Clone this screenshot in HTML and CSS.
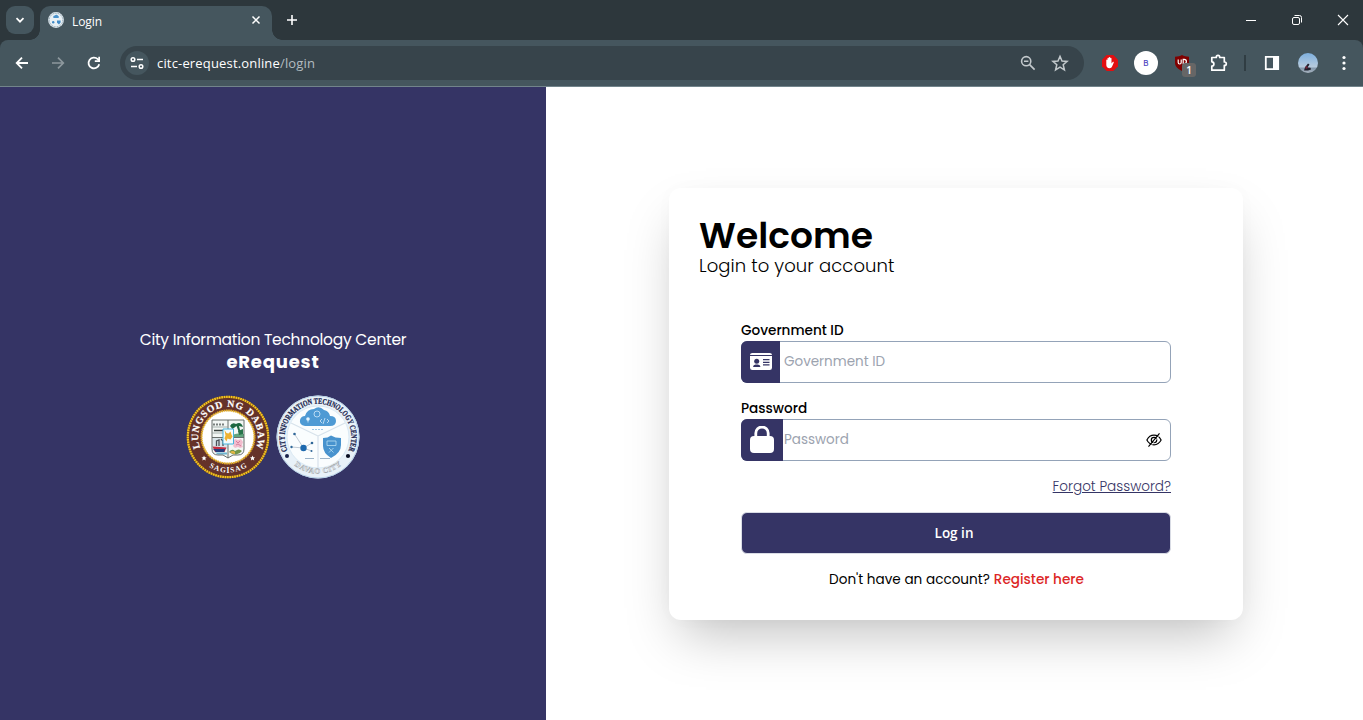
FILE: index.html
```html
<!DOCTYPE html>
<html lang="en">
<head>
<meta charset="utf-8">
<title>Login</title>
<link rel="stylesheet" href="styles.css">
</head>
<body>
<header class="browser">
  <div class="tabstrip">
    <div class="tab-search"><svg width="28" height="28" viewBox="0 0 28 28"><path d="M10.5 12.2l3.5 3.5 3.5-3.5" fill="none" stroke="#fff" stroke-width="1.7"/></svg></div>
    <div class="tab">
      <svg class="favicon" width="16" height="16" viewBox="0 0 16 16"><circle cx="8" cy="8" r="7.9" fill="#e9f1f5"/><circle cx="8" cy="8" r="6.8" fill="none" stroke="#8098a8" stroke-dasharray="1 .7"/><path d="M5.5 6a1.8 1.8 0 0 1 1.3-2.5 2 2 0 0 1 3.4.6A1.2 1.2 0 0 1 10.5 6z" fill="#4b93cb"/><path d="M9 8.5h3.6v2L11 12.5 9 10.8z" fill="#418bc7"/><circle cx="5.2" cy="10.2" r="1.2" fill="#418bc7"/></svg>
      <span class="tab-title">Login</span>
      <svg class="tab-close" width="16" height="16" viewBox="0 0 16 16"><path d="M4.5 4.5l7 7M11.5 4.5l-7 7" stroke="#fff" stroke-width="1.5"/></svg>
    </div>
    <svg class="new-tab" width="14" height="14" viewBox="0 0 14 14"><path d="M7 2v10M2 7h10" stroke="#fff" stroke-width="1.6"/></svg>
    <div class="window-buttons">
      <svg width="46" height="40" viewBox="0 0 46 40"><path d="M18 20.5h10" stroke="#fff"/></svg>
      <svg width="46" height="40" viewBox="0 0 46 40"><rect x="18.5" y="17.500" width="7" height="7" rx="1.5" fill="none" stroke="#fff"/><path d="M20.500 15.500h5a2 2 0 0 1 2 2v5" fill="none" stroke="#fff"/></svg>
      <svg width="46" height="40" viewBox="0 0 46 40"><path d="M18 15l10 10M28 15l-10 10" stroke="#fff" stroke-width="1.1"/></svg>
    </div>
  </div>
  <div class="toolbar">
    <div class="nav">
      <svg width="16" height="16" viewBox="0 0 16 16"><path d="M14 8H3M8 2.700L2.700 8 8 13.300" fill="none" stroke="#fff" stroke-width="1.8"/></svg>
      <svg width="16" height="16" viewBox="0 0 16 16"><path d="M2 8h11M8 2.700L13.300 8 8 13.300" fill="none" stroke="#8d989d" stroke-width="1.7"/></svg>
      <svg width="16" height="16" viewBox="0 0 16 16"><path d="M13.200 9.200A5.400 5.400 0 1 1 11.800 4.200L13 5.400" fill="none" stroke="#fff" stroke-width="1.8"/><path d="M14 1.800V7H8.800V5.300h3.500V1.800z" fill="#fff"/></svg>
    </div>
    <div class="omnibox">
      <div class="site-info"><svg width="24" height="24" viewBox="0 0 24 24"><g fill="none" stroke="#fff" stroke-width="1.500"><circle cx="8" cy="8.500" r="1.800"/><path d="M12 8.500h6M6 15.500h6"/><circle cx="16" cy="15.500" r="1.800"/></g></svg></div>
      <div class="url">citc-erequest.online<span class="path">/login</span></div>
      <svg class="zoom-icon" width="16" height="16" viewBox="0 0 16 16"><g fill="none" stroke="#c3c9cc" stroke-width="1.600"><circle cx="6.200" cy="6.200" r="4.600"/><path d="M9.600 9.600l5 5M4 6.200h4.400"/></g></svg>
      <svg width="18" height="18" viewBox="0 0 18 18"><path d="M9 2.300l2 4.700 5.100.4-3.900 3.400 1.200 5L9 13.100l-4.400 2.700 1.200-5L1.900 7.400 7 7z" fill="none" stroke="#c3c9cc" stroke-width="1.500"/></svg>
    </div>
    <div class="extensions">
      <svg width="16" height="16" viewBox="0 0 16 16"><path d="M4.700 0h6.600L16 4.700v6.600L11.300 16H4.700L0 11.300V4.700z" fill="#e20e10"/><path d="M4.300 8.500V5.200c0-.9 1.100-.9 1.200 0V3.400c0-.9 1.200-.9 1.300 0v-.8c0-.9 1.300-.9 1.400 0v.8c0-.8 1.300-.8 1.300.1v5l1-1.300c.6-.7 1.600-.3 1.200.5l-1.500 3.500c-.5 1.300-1.200 2-2.700 2-2 0-3.200-1.300-3.200-3.200z" fill="#fff"/></svg>
      <div class="ext-b">B</div>
      <div class="shield">
        <svg width="14" height="16" viewBox="0 0 14 16"><path d="M7 0c2 1.300 4 1.600 7 1.700v6c0 4.300-3.500 6.500-7 8.300C3.500 14.200 0 12 0 7.700v-6C3 1.600 5 1.300 7 0z" fill="#800000"/><path d="M3.200 4.500v3a1.500 1.500 0 0 0 3 0v-3M8.200 4.300v4.400h1a2.200 2.200 0 0 0 0-4.400z" fill="none" stroke="#fff" stroke-width="1.200"/></svg>
        <span class="badge">1</span>
      </div>
      <svg width="18" height="18" viewBox="0 0 18 18"><path d="M1.800 3.500H6.300V3a1.700 1.700 0 0 1 3.400 0v.5h4.600V8h.3a1.700 1.700 0 0 1 0 3.400h-.3v4.800H1.800v-4c2.800-.2 2.800-4.200 0-4.400z" fill="none" stroke="#fff" stroke-width="1.700" stroke-linejoin="round"/></svg>
      <div class="divider"></div>
      <svg class="side-panel" width="16" height="16" viewBox="0 0 16 16"><path d="M1.800 1.800h12.400v12.400H1.800z" fill="none" stroke="#fff" stroke-width="1.800"/><path d="M9 1h6v14H9z" fill="#fff"/></svg>
      <svg class="avatar" width="20" height="20" viewBox="0 0 20 20"><defs><linearGradient id="sky" x2="0" y2="1"><stop stop-color="#7eb0df"/><stop offset=".7" stop-color="#b7cbdd"/><stop offset=".75" stop-color="#8398ac"/><stop offset="1" stop-color="#a7b2be"/></linearGradient></defs><circle cx="10" cy="10" r="10" fill="url(#sky)"/><path d="M10 10.500l1.500 1-2 3 3 .2.500 1.800-3 1H6l1-3.200z" fill="#20202c"/><path d="M8 13l2 1-1 2-2-1z" fill="#702538"/></svg>
      <svg class="menu-dots" width="4" height="16" viewBox="0 0 4 16"><g fill="#fff"><circle cx="2" cy="2.500" r="1.600"/><circle cx="2" cy="8" r="1.600"/><circle cx="2" cy="13.500" r="1.600"/></g></svg>
    </div>
  </div>
</header>

<main class="page">
  <section class="brand">
    <p class="brand-org">City Information Technology Center</p>
    <p class="brand-app">eRequest</p>
    <div class="seals">
      <svg width="84" height="84" viewBox="0 0 84 84">
        <defs><path id="cityTop" d="M15.600 56A29.900 29.900 0 1 1 68.400 56"/><path id="cityBottom" d="M13 62.500A35.500 35.500 0 0 0 71 62.500"/></defs>
        <circle cx="42" cy="42" r="41" fill="#653229"/>
        <circle cx="42" cy="42" r="40.200" fill="none" stroke="#8d5d16" stroke-width="2.200"/>
        <circle cx="42" cy="42" r="40.200" fill="none" stroke="#f5c722" stroke-width="2.200" stroke-dasharray="1.600 .8"/>
        <circle cx="42" cy="42" r="26.500" fill="#fff" stroke="#e1ac28" stroke-width="2" stroke-dasharray="1.800 .5"/>
        <text class="seal-city"><textPath href="#cityTop" startOffset="50%" text-anchor="middle" textLength="116">LUNGSOD NG DABAW</textPath></text>
        <text class="seal-motto"><textPath href="#cityBottom" startOffset="50%" text-anchor="middle" textLength="40">SAGISAG</textPath></text>
        <path id="star" d="M18 60.500l.8 1.700 1.900.2-1.400 1.200.4 1.900-1.700-1-1.600 1 .4-1.900-1.400-1.200 1.900-.2z" fill="#fff"/>
        <use href="#star" x="48.500"/>
        <path d="M26 25h32v29q0 6-6 6h-5l-5 3-5-3h-5q-6 0-6-6z" fill="#f3f7f5"/>
        <path d="M26.500 31h15v2h-15zM26.500 37h15v2h-15z" fill="#ccd4d1"/>
        <path d="M28 30.500v-2m3 2v-2m3 2v-2m3 2v-2m-9 7h11" stroke="#39413f" stroke-width="1.300"/>
        <path d="M43 42q6-5 15-3v3z" fill="#62a67e"/><path d="M44 31q2-4 6-2 5-3 7 3l-4-1 2 8h-1.500l-3-8-4 3z" fill="#1d6841"/><path d="M52 36l5-2v5l-4 1z" fill="#28744a"/>
        <path d="M26.500 43H42v11H26.500z" fill="#d9e5ea"/><path d="M30.500 51v-5l2.500-1v6m2-7l2 2v5" stroke="#4b5158" stroke-width="1.300" fill="none"/>
        <path d="M26.500 51.500l14 1-2 4.500H29z" fill="#c42f43"/><path d="M27 54h12l-1 3H30z" fill="#263e7d"/><path d="M29 57.500h12v2H32z" fill="#6eb4d0"/>
        <path d="M47 46l2-2 3 1 3-1 2 3-1 3 1 2-3 1-2-1-3 1-2-2 1-2z" fill="#f2bdce"/><path d="M50 46l2 2 2-2m-4 4 2-1 3 2" stroke="#ce6f91" stroke-width=".8" fill="none"/>
        <path d="M43 57q3-4 6-1 4-3 7 0-2 3-6 3.500-4 0-7-2.500z" fill="#73964b"/><path d="M44 57q3-2 5 0v2q-3 0-5-2z" fill="#e7b745"/>
        <path d="M26 25h32v29q0 6-6 6h-5l-5 3-5-3h-5q-6 0-6-6zM42 25v38M26 42.500h32" fill="none" stroke="#59605d" stroke-width=".9"/>
        <path d="M37 34h10.500v15H37z" fill="#f4fbfd" stroke="#45b4dc" stroke-width="1"/><path d="M38.500 35l2 3 2 .5 2-2 1 3 1 2-2 3-3-1-1 3-2-3 1-3z" fill="#eeb232"/>
      </svg>
      <svg width="84" height="84" viewBox="0 0 84 84">
        <defs><path id="centerTop" d="M12.500 57.500A33.300 33.300 0 1 1 71.500 57.500"/><path id="centerBottom" d="M10.500 61A37 37 0 0 0 73.500 61"/></defs>
        <circle cx="42" cy="42" r="41.500" fill="#e8f1f8"/><circle cx="42" cy="42" r="41" fill="none" stroke="#b6d0e6"/>
        <circle cx="42" cy="42" r="31" fill="#fafdfe" stroke="#dbeaf4" stroke-width="1"/>
        <path d="M42 41V73M42 41L15 28M42 41l27-13" stroke="#d7e2eb" stroke-width="1.200"/>
        <path d="M29 31q-6-1-5-6 1-4 5-4 2-7 9-7 5-4 10 1 5 1 6 6 6 0 6 5 0 5-6 5z" fill="#4e9ad4"/><circle cx="41" cy="19" r="3" fill="none" stroke="#d2eafa" stroke-width=".8"/><path d="M32 24.500v3M46 24l-2 2 2 2m5-4l2 2-2 2m-2-5-2 6" fill="none" stroke="#d2eafa" stroke-width=".8"/><circle cx="32" cy="24" r="1.800" fill="#e2f4ff"/>
        <path d="M36 34.500h11" stroke="#9fc8e6" stroke-dasharray="2 1"/>
        <path d="M18.500 39l9 14 8.500-5M27.500 53l-12-1M27.500 53l8 3" fill="none" stroke="#a7b4c3" stroke-width=".7"/><circle cx="27.500" cy="53" r="3.200" fill="#1e69ae"/><g fill="#2f6798"><circle cx="18.500" cy="39" r="1.300"/><circle cx="36" cy="48" r="1.300"/><circle cx="15.500" cy="52" r="1.200"/><circle cx="35.500" cy="56" r="1"/></g><path d="M29 63.500h9m6 0h10" stroke="#9db4c9" stroke-width="1.200"/>
        <path d="M47 43q5 0 8-2.500Q59 43 65 43v7q0 8-10 13-8-5-8-12z" fill="#4893ce"/><path d="M51 46h9v4.500h-9zM53 53l4.500 4.500m0-4.500-4.500 4.500" fill="none" stroke="#b8def4" stroke-width=".8"/>
        <text class="seal-center"><textPath href="#centerTop" startOffset="50%" text-anchor="middle" textLength="132" lengthAdjust="spacingAndGlyphs">CITY INFORMATION TECHNOLOGY CENTER</textPath></text>
        <text class="seal-davao"><textPath href="#centerBottom" startOffset="50%" text-anchor="middle" textLength="51">DAVAO CITY</textPath></text>
        <circle cx="11" cy="61" r="2" fill="#18224c"/><circle cx="72" cy="61" r="2.100" fill="#080d20"/>
      </svg>
    </div>
  </section>

  <section class="content">
    <form class="card">
      <h1 class="welcome">Welcome</h1>
      <p class="subtitle">Login to your account</p>
      <div class="fields">
        <label class="label label-id">Government ID</label>
        <div class="field">
          <div class="icon-box icon-id"><svg width="22" height="18" viewBox="0 0 22 18"><path d="M2.300 0h17.400Q22 0 22 2H0Q0 0 2.300 0zM0 3h22v11.700Q22 17 19.700 17H2.300Q0 17 0 14.700z" fill="#fff"/><g fill="#353465"><circle cx="6.700" cy="8.300" r="2.500"/><path d="M3 14q.2-2.500 2.500-2.500h2.300q2.500 0 2.700 2.500zM13 6h6.500v1.200H13zM13 8.700h6.500v1.200H13zM13 11.300h6.500v1.200H13z"/></g></svg></div>
          <span class="placeholder ph-id">Government ID</span>
        </div>
        <label class="label label-pass">Password</label>
        <div class="field">
          <div class="icon-box icon-lock"><svg width="24" height="27" viewBox="0 0 24 27"><path d="M5.800 12V7.200a6.200 6.200 0 0 1 12.400 0V12" fill="none" stroke="#fff" stroke-width="2.800"/><rect y="10" width="24" height="17" rx="4" fill="#fff"/></svg></div>
          <span class="placeholder ph-pass">Password</span>
          <svg class="eye" width="16" height="14" viewBox="0 0 16 14"><g fill="none" stroke="#000" stroke-width="1.200"><path d="M.9 7Q3.300 2.200 8 2.200T15.100 7Q12.700 11.800 8 11.800T.9 7z"/><circle cx="8" cy="7" r="2.700"/><path d="M13.500.4L2.500 13.600"/><path d="M14.700 1.200L3.900 14" stroke="#fff" stroke-width=".8"/></g></svg>
        </div>
        <a class="forgot">Forgot Password?</a>
        <button class="login" type="button">Log in</button>
        <p class="register"><span class="question">Don't have an account?</span><a class="register-link">Register here</a></p>
      </div>
    </form>
  </section>
</main>
</body>
</html>
```
FILE: styles.css
```css
* { box-sizing: border-box; }
body { margin: 0; height: 720px; overflow: hidden; background: #fff; color: #000; font-family: Poppins, Inter, sans-serif; }
p, h1 { margin: 0; white-space: nowrap; }
svg { display: block; flex: none; }

.browser { height: 87px; background: #2d373c; color: #fff; font-family: "Segoe UI", "Open Sans", sans-serif; }
.tabstrip { display: flex; align-items: center; height: 40px; padding-left: 6px; }
.tab-search { width: 28px; height: 28px; border-radius: 9px; background: #45565e; }
.tab { position: relative; display: flex; align-items: center; align-self: flex-end; width: 232px; height: 34px; margin-left: 6px; padding: 0 8px 6px; border-radius: 10px 10px 0 0; background: #45565e; }
.tab::before, .tab::after { content: ""; position: absolute; bottom: 0; width: 10px; height: 10px; }
.tab::before { left: -10px; background: radial-gradient(circle at 0 0, transparent 9.500px, #45565e 10px); }
.tab::after { right: -10px; background: radial-gradient(circle at 100% 0, transparent 9.500px, #45565e 10px); }
.tab-title { margin-left: 8px; padding-top: 2px; font-size: 12px; letter-spacing: -.1px; }
.tab-close { margin-left: auto; }
.new-tab { margin-left: 13px; }
.window-buttons { display: flex; margin-left: auto; margin-right: -3px; }
.toolbar { display: flex; align-items: center; height: 47px; padding: 0 17px 1px 14px; border-bottom: 1px solid #72848b; border-radius: 8px 8px 0 0; background: #45565e; }
.nav { display: flex; gap: 20px; }
.omnibox { display: flex; align-items: center; width: 964px; height: 34px; margin-left: 18px; padding: 0 15px 0 5px; border-radius: 17px; background: #37444b; }
.site-info { width: 24px; height: 24px; border-radius: 50%; background: #45565e; }
.url { flex: 1; margin-left: 8px; font-size: 13px; letter-spacing: .17px; }
.path { color: #b4bcc0; }
.zoom-icon { margin-right: 15px; }
.extensions { display: flex; flex: 1; align-items: center; gap: 16px; margin-left: 18px; }
.ext-b { width: 24px; height: 24px; border-radius: 50%; background: #fff; color: #4e45c1; font: 500 8px/24px Inter, sans-serif; text-align: center; }
.shield { position: relative; width: 14px; margin-left: 1px; }
.shield + svg { margin-left: 5px; }
.badge { position: absolute; left: 7px; top: 8px; width: 14px; height: 14px; border-radius: 3px; background: #666; font-size: 10px; font-weight: 600; line-height: 14px; text-align: center; }
.divider { width: 2px; height: 16px; background: #303d43; }
.side-panel { margin-left: 2px; }
.avatar { margin-left: 2px; }
.menu-dots { margin-left: 8px; }

.page { display: flex; height: 633px; }
.brand { display: flex; flex: none; flex-direction: column; align-items: center; width: 546px; padding-top: 242px; background: #353465; color: #fff; }
.brand-org { font-size: 15.500px; line-height: 22px; letter-spacing: -.26px; }
.brand-app { font-size: 18px; font-weight: 700; line-height: 22px; letter-spacing: .8px; }
.seals { display: flex; gap: 6px; margin-top: 22px; }
.seal-city { fill: #fff; stroke: #fff; stroke-width: .2px; font: 700 9.800px "Liberation Serif", serif; }
.seal-motto { fill: #fff; font: 700 7.500px "Liberation Serif", serif; }
.seal-center { fill: #18224c; stroke: #18224c; stroke-width: .25px; font: 700 8.200px "Liberation Serif", serif; }
.seal-davao { fill: #f3f6f8; stroke: #a1a6aa; stroke-width: .45px; font: 700 7.500px "Liberation Serif", serif; }

.content { flex: 1; padding: 101px 0 0 123px; }
.card { width: 574px; height: 432px; padding: 30px 30px 0; border-radius: 12px; background: #fff; box-shadow: 0 25px 50px -12px rgba(0, 0, 0, .25), 0 0 20px rgba(0, 0, 0, .02); }
.welcome { font-size: 36px; font-weight: 600; line-height: 36px; letter-spacing: .05px; }
.subtitle { font-size: 18px; font-weight: 300; line-height: 24px; letter-spacing: .08px; }
.fields { display: flex; flex-direction: column; width: 430px; margin: 43px 0 0 42px; font-size: 13.600px; line-height: 20px; }
.label { align-self: flex-start; font-weight: 500; }
.label-pass { margin-top: 16px; }
.field { display: flex; align-items: center; height: 42px; padding-right: 8px; border: 1px solid #94a3b8; border-radius: 6px; }
.icon-box { display: flex; align-items: center; justify-content: center; height: 42px; margin-left: -1px; border-radius: 6px 0 0 6px; background: #353465; }
.icon-id { width: 39px; }
.icon-lock { width: 42px; padding-bottom: 1px; }
.placeholder { color: #9ca3af; font-size: 13.500px; }
.ph-id { margin-left: 4px; }
.ph-pass { margin-left: 1px; }
.eye { margin-left: auto; }
.forgot { align-self: flex-end; margin-top: 16px; color: #353465; font-weight: 300; text-decoration: underline; }
.login { height: 42px; margin-top: 15px; padding: 0 10px 0 6px; border: 1px solid #d9dce5; border-radius: 6px; background: #353465; color: #fff; font: 600 13.500px "Segoe UI", "Open Sans", sans-serif; }
.register { display: flex; gap: 4px; align-self: center; margin: 16px 0 0 1px; }
.register-link { color: #dc2626; font-weight: 500; }
```
